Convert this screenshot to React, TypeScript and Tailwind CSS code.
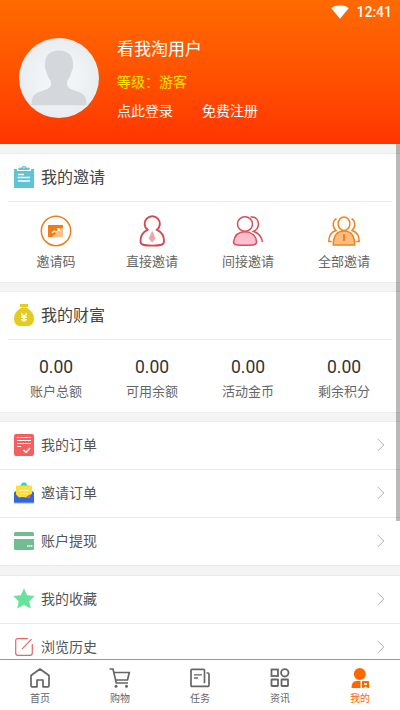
import React from 'react';

interface MenuItem {
  label: string;
  icon: React.ReactNode;
}

const WifiIcon = () => (
  <svg width="18" height="14" viewBox="0 0 18 14">
    <path d="M0.3 3.2C5 -0.6 13 -0.6 17.7 3.2L9 13.8z" fill="#fff" />
  </svg>
);

const Avatar = () => (
  <svg width="80" height="80" viewBox="0 0 80 80">
    <defs>
      <radialGradient id="avatarBg">
        <stop offset="0.4" stopColor="#f2f5f8" />
        <stop offset="1" stopColor="#e9edf0" />
      </radialGradient>
    </defs>
    <circle cx="40" cy="40" r="40" fill="url(#avatarBg)" />
    <path
      d="M40 12.500c-9 0-14 5-14 13 0 1.500-.4 2.500-.1 4 .3 2 1.100 2.500 1.600 4.500.9 4 2.300 6 4 8.500.8 2.500.7 5-.5 6.500-2 2.500-7.500 3.500-12 5.500C13.500 57 12.700 60 12.600 67.200h54.800c-.1-7.200-.9-10.200-6.400-12.700-4.500-2-10-3-12-5.500-1.200-1.500-1.300-4-.5-6.500 1.700-2.500 3.100-4.500 4-8.500.5-2 1.300-2.500 1.600-4.500.2-1.500-.1-2.500-.1-4 0-8-5-13-14-13z"
      fill="#d4d8dd"
    />
  </svg>
);

const ClipboardIcon = () => (
  <svg width="20" height="22" viewBox="0 0 20 22">
    <path d="M0 3h3v2h14V3h3v19H0z" fill="#5dc4d6" />
    <path d="M4.500 1.800h3C8.200-.5 11.800-.5 12.500 1.800h3V4h-11z" fill="#5dc4d6" />
    <circle cx="10" cy="1.800" r=".7" fill="#fff" />
    <path d="M4 8.500h6M3.500 11.500h12.500M4 15h12" stroke="#fff" strokeWidth="1.400" />
  </svg>
);

const MoneyBagIcon = () => (
  <svg width="20" height="22" viewBox="0 0 20 22">
    <path d="M6 0h8v2.500l-1 1H7l-1-1z" fill="#e5cb21" />
    <path d="M7 4h6c3.500 2 7 5.500 7 10.500 0 5-3 7.500-6 7.500H6c-3 0-6-2.500-6-7.500C0 9.500 3.500 6 7 4z" fill="#e5cb21" />
    <path d="M7.300 9.500 10 13l2.700-3.500M10 13v5M7 13.300h6M7 15.800h6" stroke="#fff" strokeWidth="1.500" fill="none" />
  </svg>
);

const InviteCodeIcon = () => (
  <svg width="32" height="32" viewBox="0 0 32 32">
    <circle cx="16" cy="16" r="14.700" fill="none" stroke="#e8821e" strokeWidth="1.500" />
    <path d="M8 10h15v12H8z" fill="#f47a12" />
    <path d="M23 12v10H12z" fill="#fbc08c" />
    <path d="m12 18 2.200-2 1.800 1.200 3.500-3M17 13.800h2.700v2.500" stroke="#fff" strokeWidth="1.200" fill="none" />
  </svg>
);

const DirectIcon = () => (
  <svg width="32" height="32" viewBox="0 0 32 32" fill="none" stroke="#d5484f" strokeWidth="1.900">
    <path d="M11.500 14.800a7.600 7.600 0 1 1 9.500 0c4.500 2 7 5.500 7 11.200 0 2.500-.7 3-2 3.500-4 1.500-15.500 1.500-19.500 0-1.300-.5-2-1-2-3.500 0-5.700 2.800-9.200 7-11.200z" />
    <path d="m16.200 15.500 3.300 8-3.300 4-3.500-4z" fill="#f1a4a7" stroke="none" />
  </svg>
);

const IndirectIcon = () => (
  <svg width="32" height="32" viewBox="0 0 32 32" fill="none" stroke="#d5505b" strokeWidth="1.500">
    <path d="M18.500 2c9-1 10.500 10.500 3 14.500 5 1.500 8 5.500 9 10.500" />
    <ellipse cx="13" cy="9" rx="7.500" ry="7.300" />
    <path d="M1.500 27C2.500 20 7 16.800 13 16.800S24 20 24.500 27c0 3-3 3.200-11.500 3.200S1.200 30 1.500 27z" fill="#ffbfcf" />
  </svg>
);

const AllIcon = () => (
  <svg width="32" height="32" viewBox="0 0 32 32" fill="none" stroke="#ee8420" strokeWidth="1.500">
    <path d="M8.500 3.500C4 6 4.500 12.500 8 15.500 3 17 .8 21 .8 26.500h3M23.500 3.500c4.500 2.500 4 9 .5 12 5 1.500 7.200 5.500 7.200 11h-3" />
    <ellipse cx="16" cy="8.700" rx="5.900" ry="6.700" />
    <path d="M5.300 30c0-9 4-14 10.700-14s10.700 5 10.700 14z" fill="#fdbb7d" />
    <path d="M16 19v7" strokeWidth="2" />
  </svg>
);

const OrderIcon = () => (
  <svg width="20" height="22" viewBox="0 0 20 22" fill="none">
    <rect width="20" height="22" rx="2" fill="#f65f60" />
    <path d="M3 3.500h14M3 6.500h14M3 9.500h14M3 12.500h4" stroke="#fff" strokeWidth="1" />
    <path d="m9.500 16 2.500 2.500 4-4.500" stroke="#fff" strokeWidth="1.500" />
  </svg>
);

const EnvelopeIcon = () => (
  <svg width="20" height="22" viewBox="0 0 20 22">
    <path d="M6 4 8.500.5h3L14 4z" fill="#33d6c3" />
    <path d="M0 10.500 2 9h16l2 1.500V21H0z" fill="#3266db" />
    <path d="m12 16 5-4-1 4z" fill="#e35a8b" />
    <path d="M2 3.500h16v8.500l-3 1-3 2.500-4-.5-3 .5-3-3z" fill="#fddf39" />
    <path d="M5 8.500h10M6 11.500h8" stroke="#fff6b5" strokeWidth="1" />
    <path d="M0 21h20" stroke="#8fadec" strokeWidth="1" />
  </svg>
);

const CardIcon = () => (
  <svg width="20" height="18" viewBox="0 0 20 18">
    <rect width="20" height="18" rx="1.500" fill="#6fbd90" />
    <path d="M0 5.500h20" stroke="#fff" strokeWidth="3" />
    <path d="M13 14h5.500" stroke="#fff" strokeWidth="1.500" strokeDasharray="1.500 .5" />
  </svg>
);

const StarIcon = () => (
  <svg width="22" height="21" viewBox="0 0 22 21">
    <path d="m11 .3 3.100 6.900 7.700.8-5.600 5.300 1.700 7.200L11 17l-6.800 3.500 1.500-7.200L.2 8l7.600-.8z" fill="#69e29b" />
  </svg>
);

const HistoryIcon = () => (
  <svg width="18" height="18" viewBox="0 0 18 18" fill="none" stroke="#e0666b" strokeWidth="1.200">
    <path d="M13 .7H3C1.200.7.700 1.200.700 3v12c0 1.800.5 2.300 2.300 2.300h12c1.800 0 2.300-.5 2.300-2.300V6M7 11.200 16.500 1.200" />
  </svg>
);

const Chevron = () => (
  <svg width="8" height="14" viewBox="0 0 8 14" fill="none" stroke="#b0b0b0" strokeWidth="1">
    <path d="m.8 1 6 6-6 6" />
  </svg>
);

const HomeIcon = () => (
  <svg width="20" height="20" viewBox="0 0 20 20" fill="none" stroke="#666" strokeWidth="1.700" strokeLinejoin="round">
    <path d="M1 7.500 10 1l9 6.500v10.300a1 1 0 0 1-1 1h-5V12H7v6.800H2a1 1 0 0 1-1-1z" />
  </svg>
);

const CartIcon = () => (
  <svg width="22" height="20" viewBox="0 0 22 20" fill="none" stroke="#666" strokeWidth="1.700">
    <path d="M.5 1H4l3.300 14H19M4.500 4.500h15.800l-1.800 7.500H6.500" />
    <circle cx="7" cy="18.300" r="1.500" fill="#666" stroke="none" />
    <circle cx="17.500" cy="18.300" r="1.500" fill="#666" stroke="none" />
  </svg>
);

const TaskIcon = () => (
  <svg width="20" height="20" viewBox="0 0 20 20" fill="none" stroke="#666" strokeWidth="1.700">
    <path d="M14.500 18.300H2c-.8 0-1-.3-1-1V2.300c0-.8.3-1 1-1h11.500c.7 0 1 .3 1 1v13M16.500 5h1.500c.8 0 1 .3 1 1v11.300c0 .7-.3 1-1 1h-4" />
    <path d="M4 6.800h8M4 10h4" strokeWidth="1.300" />
  </svg>
);

const NewsIcon = () => (
  <svg width="20" height="20" viewBox="0 0 20 20" fill="none" stroke="#666" strokeWidth="1.800">
    <rect x="1.500" y="1.500" width="6.500" height="6.500" />
    <circle cx="14.800" cy="4.800" r="3.700" />
    <rect x="1.500" y="11.500" width="6.500" height="6.500" rx=".5" />
    <rect x="11.500" y="11.500" width="6.500" height="6.500" rx=".5" />
  </svg>
);

const MineIcon = () => (
  <svg width="20" height="20" viewBox="0 0 20 20" fill="#ff6600">
    <circle cx="9.800" cy="6" r="6" />
    <path d="M10.500 13v7h-9C1.500 16 3 13 6.500 13z" />
    <path d="M12 14c0-.7.3-1 1-1h5c.7 0 1 .3 1 1v6h-1.200l-2.300-1.500-2.300 1.500H12zm2 1v2h3v-2z" fillRule="evenodd" />
  </svg>
);

const invites: MenuItem[] = [
  { label: '邀请码', icon: <InviteCodeIcon /> },
  { label: '直接邀请', icon: <DirectIcon /> },
  { label: '间接邀请', icon: <IndirectIcon /> },
  { label: '全部邀请', icon: <AllIcon /> },
];

const wealth = [
  { label: '账户总额', value: 0 },
  { label: '可用余额', value: 0 },
  { label: '活动金币', value: 0 },
  { label: '剩余积分', value: 0 },
];

const orderMenu: MenuItem[] = [
  { label: '我的订单', icon: <OrderIcon /> },
  { label: '邀请订单', icon: <EnvelopeIcon /> },
  { label: '账户提现', icon: <CardIcon /> },
];

const otherMenu: MenuItem[] = [
  { label: '我的收藏', icon: <StarIcon /> },
  { label: '浏览历史', icon: <HistoryIcon /> },
];

const tabs: MenuItem[] = [
  { label: '首页', icon: <HomeIcon /> },
  { label: '购物', icon: <CartIcon /> },
  { label: '任务', icon: <TaskIcon /> },
  { label: '资讯', icon: <NewsIcon /> },
  { label: '我的', icon: <MineIcon /> },
];

const SectionTitle: React.FC<MenuItem> = ({ label, icon }) => (
  <div className="mx-2 flex h-12 items-center border-b border-[#ebebeb] pl-1">
    <div className="flex w-6 justify-center pb-[2px]">{icon}</div>
    <span className="ml-[5px] text-base text-[#444]">{label}</span>
  </div>
);

const MenuList: React.FC<{ items: MenuItem[] }> = ({ items }) => (
  <div className="shrink-0 border-t border-[#ebebeb] bg-white">
    {items.map((item) => (
      <div key={item.label} className="flex h-12 items-center border-b border-[#ebebeb] pr-[15px] pb-[2px] pl-3">
        <div className="flex w-6 justify-center">{item.icon}</div>
        <span className="ml-[5px] flex-1 text-sm text-[#555]">{item.label}</span>
        <Chevron />
      </div>
    ))}
  </div>
);

export default function App() {
  return (
    <div className="relative flex h-[710px] w-[400px] flex-col overflow-hidden bg-[#f4f4f4] font-['Roboto','Noto_Sans_CJK_SC',sans-serif]">
      <header className="h-36 shrink-0 bg-linear-to-b from-[#ff6a00] to-[#ff3300] text-white">
        <div className="flex h-6 items-center justify-end gap-[7px] pr-2">
          <WifiIcon />
          <span className="text-sm font-medium">12:41</span>
        </div>
        <div className="flex pt-[14px] pl-[19px]">
          <Avatar />
          <div className="ml-[18px] flex flex-col">
            <div className="-mt-px text-[17px] leading-6">看我淘用户</div>
            <div className="mt-[11px] text-sm leading-5 text-[#ffe600]">等级：游客</div>
            <div className="mt-[9px] flex gap-[29px] text-sm leading-5">
              <span>点此登录</span>
              <span>免费注册</span>
            </div>
          </div>
        </div>
      </header>

      <main className="flex min-h-0 flex-1 flex-col overflow-hidden pt-[9px]">
        {/* Invitations */}
        <section className="mb-2 h-[130px] shrink-0 border-y border-[#ebebeb] bg-white">
          <SectionTitle label="我的邀请" icon={<ClipboardIcon />} />
          <div className="grid grid-cols-4 px-2 pt-[13px]">
            {invites.map((item) => (
              <div key={item.label} className="flex flex-col items-center">
                {item.icon}
                <span className="mt-[5px] text-[13px] leading-5 text-[#666]">{item.label}</span>
              </div>
            ))}
          </div>
        </section>

        {/* Balances */}
        <section className="mb-2 h-[122px] shrink-0 border-y border-[#ebebeb] bg-white">
          <SectionTitle label="我的财富" icon={<MoneyBagIcon />} />
          <div className="grid grid-cols-4 px-2 pt-[15px]">
            {wealth.map((item) => (
              <div key={item.label} className="flex flex-col items-center">
                <span className="text-[17.5px] leading-6 text-[#333]">{item.value.toFixed(2)}</span>
                <span className="mt-[3px] text-[13px] leading-5 text-[#666]">{item.label}</span>
              </div>
            ))}
          </div>
        </section>

        <MenuList items={orderMenu} />
        <div className="h-[9px] shrink-0" />
        <MenuList items={otherMenu} />
      </main>

      {/* Tab bar, last tab is active */}
      <nav className="grid h-[51px] shrink-0 grid-cols-5 border-t border-[#999] bg-white">
        {tabs.map((tab, i) => (
          <div
            key={tab.label}
            className={`flex flex-col items-center pt-2 text-[10px] leading-[14px] ${
              i === tabs.length - 1 ? 'text-[#ff6600]' : 'text-[#666]'
            }`}
          >
            {tab.icon}
            <span className="mt-1">{tab.label}</span>
          </div>
        ))}
      </nav>

      {/* Scroll thumb */}
      <div className="absolute top-36 right-0 h-[377px] w-1 bg-black/27" />
    </div>
  );
}
